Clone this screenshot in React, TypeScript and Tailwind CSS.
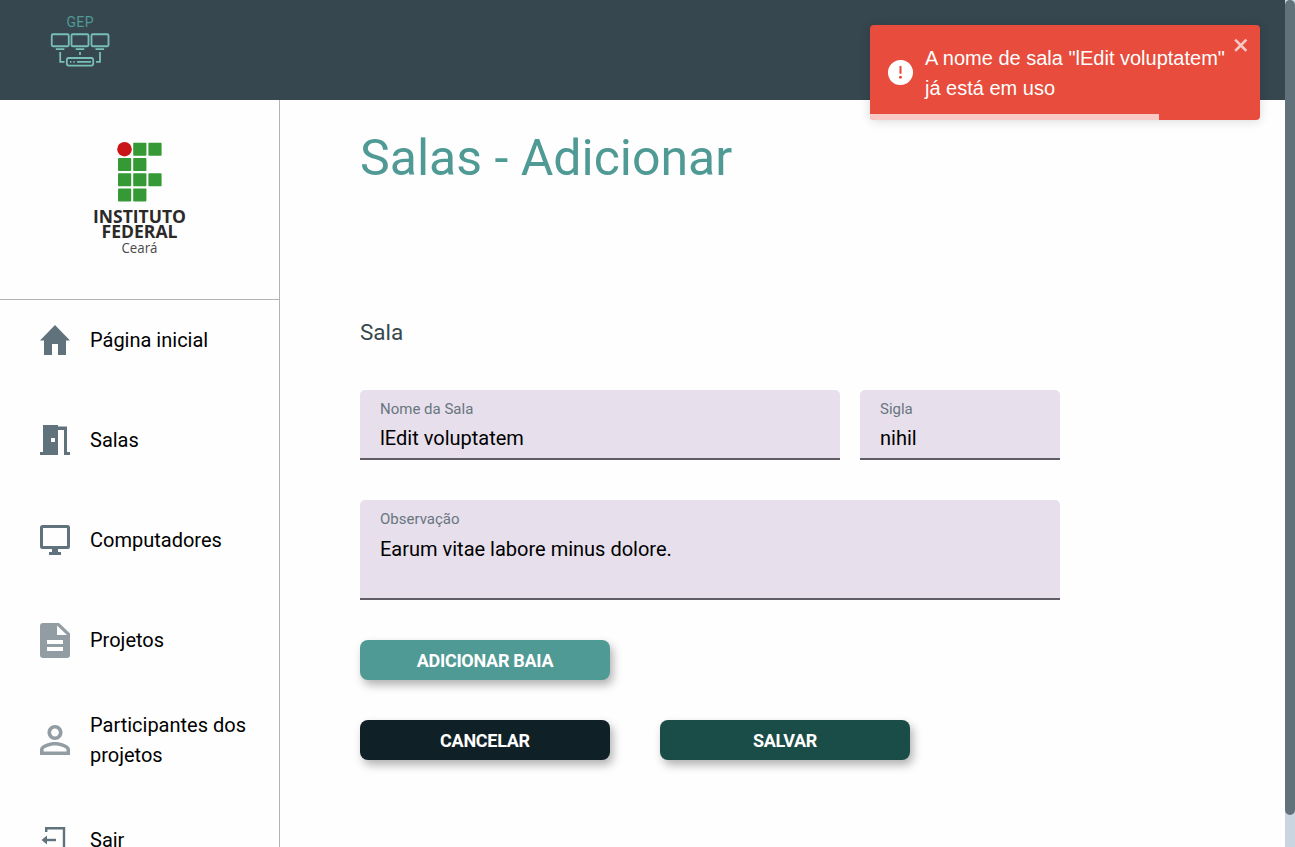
import type { ReactNode } from "react";

function GepLogo() {
  return (
    <svg width="60" height="60" viewBox="0 0 60 60" fill="none" stroke="#78bfb9" strokeWidth="1.8">
      <text x="30" y="16.5" textAnchor="middle" fontSize="14" fontFamily="Roboto, sans-serif" fill="#4f9a94" stroke="none" textLength="27">GEP</text>
      <rect x="1.75" y="24.25" width="17" height="12" rx="1.2" />
      <rect x="21.5" y="24.25" width="17" height="12" rx="1.2" />
      <rect x="41.5" y="24.25" width="17" height="12" rx="1.2" />
      <path d="M5.8 39.2h8.6M25.7 39.2h8.6M45.5 39.2h8.6M10.2 42v9.8h4.3M50 42v9.8h-4M30 42v3" />
      <rect x="16.8" y="48" width="26.4" height="7.6" rx="2" />
      <path d="M20 51.8h1.4M23.3 51.8h1.4M27 51.8h14" />
    </svg>
  );
}

const squares = [
  [1, 0], [2, 0], [0, 1], [1, 1], [0, 2], [1, 2], [2, 2], [0, 3], [1, 3],
];

function InstituteLogo() {
  return (
    <svg width="100" height="120" viewBox="0 0 100 120" fontFamily="'Open Sans', sans-serif" textAnchor="middle" fill="#2b2a28">
      <circle cx="34.5" cy="9.2" r="7.3" fill="#c91517" />
      {squares.map(([c, r]) => (
        <rect key={`${c}-${r}`} x={28 + c * 15.2} y={2.8 + r * 15.2} width="13.2" height="13" rx="0.8" fill="#359a36" />
      ))}
      <text x="49.5" y="83" fontSize="17.4" fontWeight="700" textLength="93" lengthAdjust="spacingAndGlyphs">INSTITUTO</text>
      <text x="49.5" y="98" fontSize="17.4" fontWeight="700" textLength="76" lengthAdjust="spacingAndGlyphs">FEDERAL</text>
      <text x="49.5" y="113" fontSize="14" fill="#4a4a4a" textLength="36" lengthAdjust="spacingAndGlyphs">Ceará</text>
    </svg>
  );
}

function NavItem({ icon, children }: { icon: ReactNode; children: ReactNode }) {
  return (
    <a className="flex h-[100px] shrink-0 items-center gap-5 pr-4 pb-5 pl-10 text-[20px] leading-[30px] text-black">
      <span className="flex w-[30px] shrink-0 items-center justify-center">{icon}</span>
      <span className="min-w-0 flex-1">{children}</span>
    </a>
  );
}

function Field({ label, value, className, valueClassName = "mt-1" }: { label: string; value: string; className: string; valueClassName?: string }) {
  return (
    <label className={`flex flex-col rounded-t-[5px] border-b-2 border-[#605d66] bg-[#e7dfec] px-5 pt-[9px] ${className}`}>
      <span className="text-[15px] leading-5 text-[#67767f]">{label}</span>
      <span className={`text-[20px] leading-[30px] text-black ${valueClassName}`}>{value}</span>
    </label>
  );
}

function Button({ children, className }: { children: ReactNode; className: string }) {
  return (
    <button className={`h-10 w-[250px] rounded-lg text-[18px] font-bold tracking-[-0.28px] text-white shadow-[3px_5px_10px_rgba(0,0,0,0.3)] ${className}`}>
      {children}
    </button>
  );
}

function Toast() {
  return (
    <div className="absolute top-[25px] left-[870px] flex h-[95px] w-[390px] items-center overflow-hidden rounded-[4px] bg-[#e74c3c] pl-[18px] font-['Liberation_Sans',sans-serif] text-[20px] leading-[30px] text-white shadow-[0_1px_10px_rgba(0,0,0,0.1),0_2px_15px_rgba(0,0,0,0.05)]">
      <svg className="mr-3 shrink-0" width="25" height="25" viewBox="0 0 24 24" fill="white">
        <path d="M11.983 0a12.206 12.206 0 00-8.51 3.653A11.8 11.8 0 000 12.207 11.779 11.779 0 0011.8 24h.214A12.111 12.111 0 0024 11.791 11.766 11.766 0 0011.983 0zM10.5 16.542a1.476 1.476 0 011.449-1.53h.027a1.527 1.527 0 011.523 1.47 1.475 1.475 0 01-1.449 1.53h-.027a1.529 1.529 0 01-1.523-1.47zM11 12.5v-6a1 1 0 012 0v6a1 1 0 11-2 0z" />
      </svg>
      <p className="w-[302px]">A nome de sala "lEdit voluptatem" já está em uso</p>
      <svg className="absolute top-[10px] right-[10px]" width="17.5" height="20" viewBox="0 0 14 16" fill="white" opacity="0.7">
        <path fillRule="evenodd" d="M7.71 8.23l3.75 3.75-1.48 1.48-3.75-3.75-3.75 3.75L1 11.98l3.75-3.75L1 4.48 2.48 3l3.75 3.75L9.98 3l1.48 1.48-3.75 3.75z" />
      </svg>
      <div className="absolute bottom-0 left-0 h-[6px] w-[289px] bg-white/70" />
    </div>
  );
}

export default function App() {
  return (
    <div className="relative flex h-[847px] w-[1295px] overflow-hidden bg-[#fefefe] font-['Roboto',sans-serif]">
      <div className="flex min-w-0 flex-1 flex-col">
        <header className="h-[100px] shrink-0 bg-[#37474f] pt-[10px] pl-[50px]">
          <GepLogo />
        </header>
        <div className="flex min-h-0 flex-1">
          <aside className="flex w-[280px] shrink-0 flex-col overflow-hidden border-r border-[#b3b3b3]">
            <div className="flex h-[200px] shrink-0 items-center justify-center border-b border-[#b3b3b3]">
              <InstituteLogo />
            </div>
            <nav className="flex flex-col">
              <NavItem icon={<svg width="30" height="30" viewBox="0 0 30 30" fill="#60727b"><path d="M15 0l15 15.5h-4V30h-8V19h-6v11H4V15.5H0z" /></svg>}>Página inicial</NavItem>
              <NavItem icon={<svg width="30" height="30" viewBox="0 0 30 30" fill="#60727b"><path fillRule="evenodd" d="M3 0h15v1.500h9V27h3v3h-6V5h-6v25H0v-3h3zM11 13h4v4h-4z" /></svg>}>Salas</NavItem>
              <NavItem icon={<svg width="30" height="30" viewBox="0 0 30 30" fill="#60727b"><path fillRule="evenodd" d="M2.5 0h25A2.5 2.5 0 0130 2.5v19a2.5 2.5 0 01-2.5 2.500H18v3h3v3H9v-3h3v-3H2.5A2.5 2.5 0 010 21.500v-19A2.500 2.500 0 012.500 0zM3 3v18h24V3z" /></svg>}>Computadores</NavItem>
              <NavItem icon={<svg width="30" height="35" viewBox="0 0 30 35" fill="#929ca3"><path fillRule="evenodd" d="M3 0h16l11 10.500V32a3 3 0 01-3 3H3a3 3 0 01-3-3V3a3 3 0 013-3zM17 2.500V12h10zM7 17v4h16v-4zM7 24v4h16v-4z" /></svg>}>Projetos</NavItem>
              <NavItem icon={<svg width="30" height="30" viewBox="4 4 16 16" fill="#929ca3"><path d="M12 5.900c1.160 0 2.100.94 2.100 2.100s-.94 2.100-2.100 2.100S9.900 9.160 9.900 8s.94-2.100 2.100-2.100m0 9c2.970 0 6.100 1.460 6.100 2.100v1.100H5.900V17c0-.64 3.130-2.100 6.100-2.100M12 4C9.790 4 8 5.790 8 8s1.790 4 4 4 4-1.790 4-4-1.790-4-4-4zm0 9c-2.670 0-8 1.340-8 4v3h16v-3c0-2.660-5.330-4-8-4z" /></svg>}>Participantes dos projetos</NavItem>
              <NavItem icon={<svg width="30" height="30" viewBox="0 0 30 30" fill="none" stroke="#60727b" strokeWidth="2.4"><path d="M6.200 7V3.200h17.800v24H6.200v-4" /><path d="M6 15h10" /><path d="M1.500 15l5.500-4.500v9z" fill="#60727b" stroke="none" /></svg>}>Sair</NavItem>
            </nav>
          </aside>
          <main className="flex flex-col pt-[28px] pl-20">
            <h1 className="h-[60px] text-[50px] leading-[60px] text-[#4f9a94]">Salas - Adicionar</h1>
            <h2 className="mt-[129px] text-[22.5px] leading-[30px] text-[#37474f]">Sala</h2>
            <div className="mt-[43px] flex gap-5">
              <Field label="Nome da Sala" value="lEdit voluptatem" className="h-[70px] w-[480px]" />
              <Field label="Sigla" value="nihil" className="h-[70px] w-[200px]" />
            </div>
            <Field label="Observação" value="Earum vitae labore minus dolore." className="mt-10 h-[100px] w-[700px]" valueClassName="mt-[5px]" />
            <Button className="mt-10 bg-[#4f9a94]">ADICIONAR BAIA</Button>
            <div className="mt-10 flex gap-[50px]">
              <Button className="bg-[#102027]">CANCELAR</Button>
              <Button className="bg-[#1b4d48]">SALVAR</Button>
            </div>
          </main>
        </div>
      </div>
      <div className="w-[10px] shrink-0 bg-[#cbd5e1]">
        <div className="h-[815px] rounded-[5px] bg-[#62727b]" />
      </div>
      <Toast />
    </div>
  );
}
